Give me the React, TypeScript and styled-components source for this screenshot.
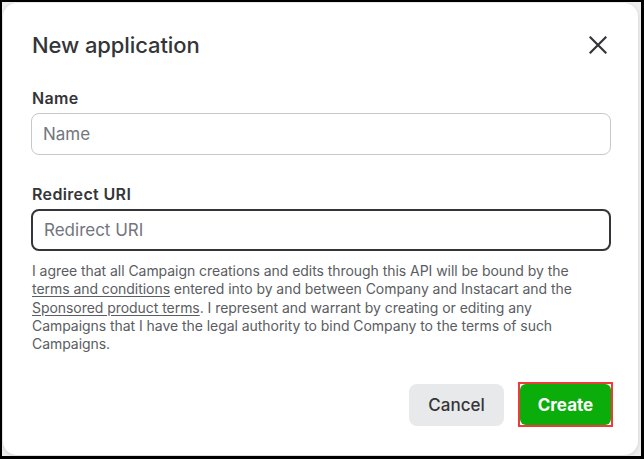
import React from "react";
import styled, { createGlobalStyle } from "styled-components";

const Global = createGlobalStyle`
  html, body { margin: 0; padding: 0; background: #000; }
  body { font-family: Inter, "Noto Sans", Arial, sans-serif; }
  * { box-sizing: border-box; }
`;

const Frame = styled.div`
  width: 644px;
  height: 459px;
  border-style: solid;
  border-color: #000;
  border-width: 2px 3px 3px 2px;
  background: #eeeeee;
  padding: 1px;
  overflow: hidden;
`;

const Dialog = styled.div`
  width: 635px;
  height: 452px;
  background: #fff;
  border-radius: 14px;
  box-shadow: 0 1px 4px rgba(0, 0, 0, 0.12);
  padding: 30px 27px 0 28px;
  display: flex;
  flex-direction: column;
`;

const Header = styled.div`
  display: flex;
  align-items: center;
  justify-content: space-between;
  height: 24px;
  padding-left: 1px;
`;

const Title = styled.h1`
  margin: 0;
  font-size: 22px;
  line-height: 24px;
  font-weight: 500;
  color: #343538;
  letter-spacing: -0.1px;
`;

const CloseButton = styled.button`
  border: 0;
  background: transparent;
  padding: 0;
  width: 20px;
  height: 20px;
  margin-right: 3px;
  display: flex;
  align-items: center;
  justify-content: center;
  cursor: pointer;
`;

const Field = styled.div<{ $top: number }>`
  margin-top: ${(p) => p.$top}px;
  display: flex;
  flex-direction: column;
`;

const Label = styled.label`
  font-size: 16px;
  line-height: 20px;
  font-weight: 600;
  color: #343538;
  padding-left: 1px;
  margin-bottom: 5px;
  letter-spacing: 0.35px;
`;

const Input = styled.input<{ $focused?: boolean }>`
  width: 100%;
  height: 42px;
  border-radius: 8px;
  border: ${(p) => (p.$focused ? "2px solid #343538" : "1px solid #c7c8cd")};
  padding: 0 11px;
  font-family: inherit;
  font-size: 17px;
  color: #343538;
  outline: none;
  background: #fff;
  &::placeholder { color: #72767e; }
`;

const Legal = styled.p`
  margin: 11px 0 0 0;
  padding-left: 1px;
  font-size: 14px;
  line-height: 18.3px;
  color: #5a5d62;
  letter-spacing: -0.05px;
`;

const TermsLink = styled.a`
  color: #5a5d62;
  text-decoration: underline;
  text-underline-offset: 2px;
`;

const Actions = styled.div`
  margin-top: 29px;
  margin-right: -2px;
  display: flex;
  align-items: center;
  justify-content: flex-end;
  gap: 14px;
`;

const Button = styled.button<{ $primary?: boolean }>`
  height: ${(p) => (p.$primary ? "41px" : "42px")};
  width: ${(p) => (p.$primary ? "91px" : "95px")};
  padding: 0;
  border: 0;
  border-radius: ${(p) => (p.$primary ? "6px" : "8px")};
  font-family: inherit;
  font-size: 17px;
  font-weight: ${(p) => (p.$primary ? 700 : 500)};
  cursor: pointer;
  background: ${(p) => (p.$primary ? "#0aad0a" : "#e8e9eb")};
  color: ${(p) => (p.$primary ? "#fff" : "#343538")};
  outline: none;
`;

const FocusRing = styled.span`
  display: inline-flex;
  border: 2px solid #ee3a3a;
`;

export default function App() {
  return (
    <>
      <Global />
      <Frame>
        <Dialog>
          <Header>
            <Title>New application</Title>
            <CloseButton aria-label="Close">
              <svg width="18" height="18" viewBox="0 0 18 18">
                <path d="M1.5 1.5 L16.5 16.5 M16.5 1.5 L1.5 16.5" stroke="#343538" strokeWidth="2.2" strokeLinecap="square" />
              </svg>
            </CloseButton>
          </Header>
          <Field $top={31}>
            <Label>Name</Label>
            <Input placeholder="Name" />
          </Field>
          <Field $top={29}>
            <Label>Redirect URI</Label>
            <Input $focused placeholder="Redirect URI" autoFocus />
          </Field>
          <Legal>
            I agree that all Campaign creations and edits through this API will be bound by the
            <br />
            <TermsLink href="#">terms and conditions</TermsLink> entered into by and between Company and Instacart and the
            <br />
            <TermsLink href="#">Sponsored product terms</TermsLink>. I represent and warrant by creating or editing any
            <br />
            Campaigns that I have the legal authority to bind Company to the terms of such
            <br />
            Campaigns.
          </Legal>
          <Actions>
            <Button>Cancel</Button>
            <FocusRing>
              <Button $primary>Create</Button>
            </FocusRing>
          </Actions>
        </Dialog>
      </Frame>
    </>
  );
}
